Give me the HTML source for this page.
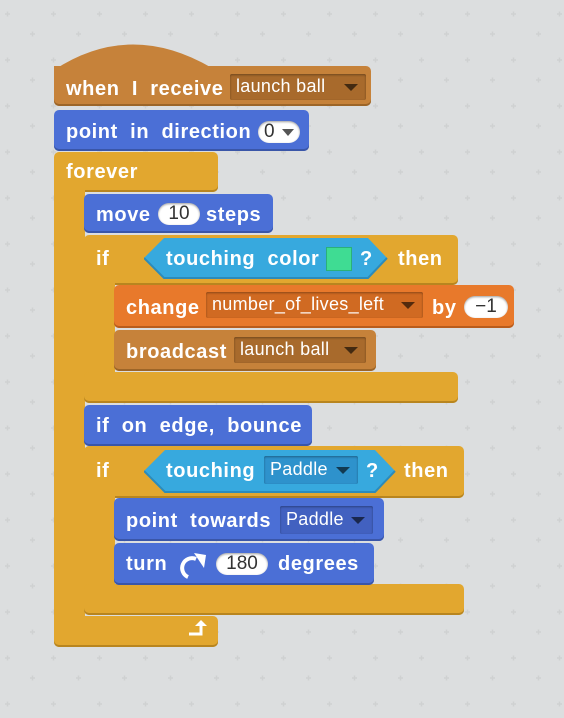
<!DOCTYPE html>
<html><head><style>
*{margin:0;padding:0;box-sizing:border-box}
body{width:564px;height:718px;background:#dcdedf;position:relative;overflow:hidden;font-family:"Liberation Sans",sans-serif;font-weight:bold;color:#fff;font-size:20px;letter-spacing:.6px}
.b{position:absolute;border-radius:5px}
.t{position:absolute;white-space:pre;line-height:20px}
.dd{position:absolute;border-radius:2px;font-weight:normal;font-size:18px;letter-spacing:.3px;padding-left:6px;box-shadow:inset 0 1px 2px rgba(0,0,0,.35);white-space:pre}
.dd:after{content:"";position:absolute;right:8px;top:50%;margin-top:-3px;border-left:7px solid transparent;border-right:7px solid transparent;border-top:7px solid rgba(0,0,0,.6)}
.in{position:absolute;background:#fff;color:#333;border-radius:11px;font-weight:normal;font-size:19px;letter-spacing:0;text-align:center;line-height:22px;box-shadow:inset 0 1px 2px rgba(0,0,0,.4)}
.blue{background:#4b6fd6;box-shadow:inset 0 -2px 0 #3a56a8}
.gold{background:#e2a72f;box-shadow:inset 0 -2px 0 #b8851f}
.brown{background:#c6823a;box-shadow:inset 0 -2px 0 #9c6528}
.org{background:#e8792b;box-shadow:inset 0 -2px 0 #b95c1c}
</style></head><body>
<svg width="564" height="718" style="position:absolute;left:0;top:0">
<defs><pattern id="p" width="46" height="46" patternUnits="userSpaceOnUse">
<path d="M5 14h5M7.5 11.5v5M30 34h5M32.5 31.5v5" stroke="#cfd1d2" stroke-width="1.5"/></pattern></defs>
<rect width="564" height="718" fill="url(#p)"/>
<path d="M54 70 Q130 20 212 68 Z" fill="#c6823a"/>
</svg>

<!-- hat -->
<div class="b brown" style="left:54px;top:66px;width:317px;height:40px;border-top-left-radius:0"></div>
<div class="t" style="left:66px;top:79px">when  I  receive</div>
<div class="dd" style="left:230px;top:74px;width:136px;height:26px;line-height:25px;background:#a86a2c">launch ball</div>

<!-- point in direction -->
<div class="b blue" style="left:54px;top:110px;width:255px;height:41px"></div>
<div class="t" style="left:66px;top:122px">point  in  direction</div>
<div class="in" style="left:258px;top:121px;width:42px;height:22px;text-align:left;padding-left:6px">0<span style="position:absolute;right:6px;top:8px;border-left:6px solid transparent;border-right:6px solid transparent;border-top:7px solid #555"></span></div>

<!-- forever -->
<div class="b gold" style="left:54px;top:152px;width:164px;height:40px"></div>
<div class="gold" style="position:absolute;left:54px;top:180px;width:31px;height:450px;box-shadow:none"></div>
<div class="b gold" style="left:54px;top:616px;width:164px;height:31px"></div>
<div class="t" style="left:66px;top:162px">forever</div>
<svg style="position:absolute;left:186px;top:618px" width="28" height="20"><path d="M3 16h12V6" stroke="#fff" stroke-width="3" fill="none"/><path d="M9 8l6-6 6 6z" fill="#fff"/></svg>

<!-- move -->
<div class="b blue" style="left:84px;top:194px;width:189px;height:39px"></div>
<div class="t" style="left:96px;top:205px">move</div>
<div class="t" style="left:206px;top:205px">steps</div>
<div class="in" style="left:158px;top:203px;width:42px;height:22px">10</div>

<!-- if 1 -->
<div class="b gold" style="left:84px;top:235px;width:374px;height:50px"></div>
<div class="gold" style="position:absolute;left:84px;top:270px;width:31px;height:120px;box-shadow:none"></div>
<div class="b gold" style="left:84px;top:372px;width:374px;height:31px"></div>
<div class="t" style="left:96px;top:249px">if</div>
<div class="t" style="left:398px;top:249px">then</div>
<svg style="position:absolute;left:144px;top:238px" width="244" height="42"><path d="M0 20 L20 0 H224 L243 20 L224 40 H20 Z" fill="#37a9de"/><path d="M0 20 L20 40 H224 L243 20" stroke="#2c8bba" stroke-width="2" fill="none"/></svg>
<div class="t" style="left:166px;top:249px">touching  color</div>
<div style="position:absolute;left:326px;top:247px;width:26px;height:24px;background:#3fdc93;border:1px solid #2bb07a"></div>
<div class="t" style="left:360px;top:249px">?</div>

<!-- change -->
<div class="b org" style="left:114px;top:285px;width:400px;height:43px"></div>
<div class="t" style="left:126px;top:298px">change</div>
<div class="dd" style="left:206px;top:292px;width:217px;height:26px;line-height:25px;background:#d06a22">number_of_lives_left</div>
<div class="t" style="left:432px;top:298px">by</div>
<div class="in" style="left:464px;top:296px;width:44px;height:22px">−1</div>

<!-- broadcast -->
<div class="b brown" style="left:114px;top:330px;width:262px;height:41px"></div>
<div class="t" style="left:126px;top:342px">broadcast</div>
<div class="dd" style="left:234px;top:337px;width:132px;height:26px;line-height:25px;background:#a86a2c">launch ball</div>

<!-- bounce -->
<div class="b blue" style="left:84px;top:405px;width:228px;height:41px"></div>
<div class="t" style="left:96px;top:416px">if  on  edge,  bounce</div>

<!-- if 2 -->
<div class="b gold" style="left:84px;top:446px;width:380px;height:52px"></div>
<div class="gold" style="position:absolute;left:84px;top:480px;width:31px;height:120px;box-shadow:none"></div>
<div class="b gold" style="left:84px;top:584px;width:380px;height:31px"></div>
<div class="t" style="left:96px;top:461px">if</div>
<div class="t" style="left:404px;top:461px">then</div>
<svg style="position:absolute;left:144px;top:450px" width="252" height="44"><path d="M0 21 L21 0 H231 L251 21 L231 42 H21 Z" fill="#37a9de"/><path d="M0 21 L21 42 H231 L251 21" stroke="#2c8bba" stroke-width="2" fill="none"/></svg>
<div class="t" style="left:166px;top:461px">touching</div>
<div class="dd" style="left:264px;top:456px;width:94px;height:28px;line-height:26px;background:#2e92cc">Paddle</div>
<div class="t" style="left:366px;top:461px">?</div>

<!-- point towards -->
<div class="b blue" style="left:114px;top:498px;width:270px;height:43px"></div>
<div class="t" style="left:126px;top:511px">point  towards</div>
<div class="dd" style="left:280px;top:506px;width:93px;height:28px;line-height:26px;background:#4261c0">Paddle</div>

<!-- turn -->
<div class="b blue" style="left:114px;top:543px;width:260px;height:42px"></div>
<div class="t" style="left:126px;top:554px">turn</div>
<svg style="position:absolute;left:176px;top:550px" width="34" height="32"><path d="M12 27 A9 9 0 0 1 20 9" stroke="#fff" stroke-width="4" fill="none"/><path d="M18 3 L30 5 L28 18 Z" fill="#fff"/></svg>
<div class="in" style="left:216px;top:553px;width:52px;height:22px">180</div>
<div class="t" style="left:278px;top:554px">degrees</div>
</body></html>
